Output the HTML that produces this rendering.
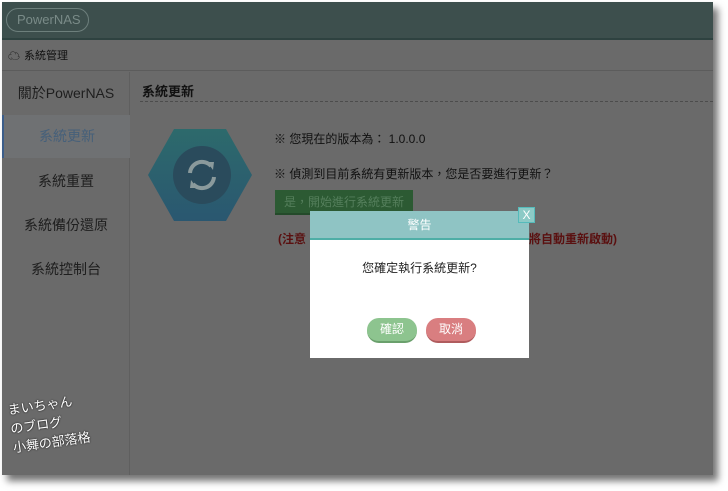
<!DOCTYPE html>
<html><head><meta charset="utf-8"><style>
*{margin:0;padding:0;box-sizing:border-box}
body{width:728px;height:491px;background:#fff;position:relative;overflow:hidden;font-family:"Liberation Sans","Noto Sans CJK TC",sans-serif}
#pg{position:absolute;left:2px;top:2px;width:711px;height:473px;background:#6a6a6a;box-shadow:5px 6px 7px rgba(0,0,0,.55);overflow:hidden}
.hd{position:absolute;left:0;top:0;width:100%;height:38px;background:#3d4f4d;border-bottom:2px solid #2e4240}
.logo{position:absolute;left:4px;top:6px;width:83px;height:24px;border:1px solid #6d7f7c;border-radius:12px;color:#7a8b88;font-size:13px;line-height:22px;padding-left:10px}
.tb{position:absolute;left:0;top:40px;width:100%;height:29px;border-bottom:1px solid #5c5c5c;font-size:11px;color:#111;line-height:29px;padding-left:22px}
.side{position:absolute;left:0;top:70px;width:128px;height:403px;border-right:1px solid #5f5f5f}
.si{position:absolute;left:0;width:128px;text-align:center;font-size:14px;color:#1e1e1e}
.sel{background:#6f7173;border-left:2px solid #3b5d8a;color:#46607a}
.t{position:absolute;left:140px;top:79px;font-size:13px;color:#111;font-weight:bold}
.dl{position:absolute;left:138px;top:99px;width:573px;border-top:1px dashed #4c4c4c}
.hex{position:absolute;left:146px;top:127px;width:104px;height:92px;clip-path:polygon(25% 0,75% 0,100% 50%,75% 100%,25% 100%,0 50%);background:linear-gradient(#2d6a6c,#2a5770)}
.circ{position:absolute;left:171px;top:144px;width:58px;height:58px;border-radius:50%;background:#2a4b5c}
.tx{position:absolute;font-size:12px;color:#111}
.btn{position:absolute;left:273px;top:188px;width:138px;height:25px;background:#2c5a33;color:#557f5c;font-size:12px;text-align:center;line-height:24px;border-bottom:2px solid #244a2a}
.red{position:absolute;font-size:12px;color:#5a1010;font-weight:bold}
.md{position:absolute;left:308px;top:209px;width:219px;height:147px;background:#fff}
.mh{height:29px;background:#8fc4c4;border-bottom:2px solid #4eaea6;text-align:center;color:#fff;font-size:12px;line-height:29px}
.x{position:absolute;left:516px;top:205px;width:17px;height:16px;background:#8ccac6;border:1px solid #5bb;color:#fff;font-size:12px;text-align:center;line-height:14px}
.mb{position:absolute;left:0;top:48px;width:100%;text-align:center;font-size:12px;color:#222}
.b{position:absolute;top:107px;width:50px;height:25px;border-radius:12px;color:#fff;font-size:12px;text-align:center;line-height:23px}
</style></head><body>
<div id="pg">
<div class="hd"><div class="logo">PowerNAS</div></div>
<div class="tb">系統管理<span style="position:absolute;left:6px;top:0;font-size:12px">☁</span></div>
<div class="side">
<div class="si" style="top:11px">關於PowerNAS</div>
<div class="si sel" style="top:43px;height:43px;line-height:43px">系統更新</div>
<div class="si" style="top:99px">系統重置</div>
<div class="si" style="top:143px">系統備份還原</div>
<div class="si" style="top:187px">系統控制台</div>
</div>
<div class="t">系統更新</div>
<div class="dl"></div>
<div class="hex"></div>
<div class="circ"><svg width="58" height="58" viewBox="0 0 58 58"><g fill="none" stroke="#8a9a9c" stroke-width="4"><path d="M17 27a12 12 0 0 1 21-7"/><path d="M41 31a12 12 0 0 1-21 7"/></g><path d="M34 16l7 0-1 8z M24 42l-7 0 1-8z" fill="#8a9a9c"/></svg></div>
<div class="tx" style="left:272px;top:128px">※ 您現在的版本為： 1.0.0.0</div>
<div class="tx" style="left:272px;top:163px">※ 偵測到目前系統有更新版本，您是否要進行更新？</div>
<div class="btn">是，開始進行系統更新</div>
<div class="red" style="left:276px;top:228px">(注意</div>
<div class="red" style="left:527px;top:228px">將自動重新啟動)</div>
<div class="md"><div class="mh">警告</div><div class="mb">您確定執行系統更新?</div>
<div class="b" style="left:57px;background:#8dc48f;border-bottom:2px solid #6aa06c">確認</div>
<div class="b" style="left:116px;background:#d97e80;border-bottom:2px solid #b05c5e">取消</div></div>
<div class="x">X</div>
<div style="position:absolute;left:8px;top:392px;color:#fff;font-size:13px;transform:rotate(-8deg);text-shadow:0 0 2px #000">まいちゃん<br>のブログ<br>小舞の部落格</div>
</div>
</body></html>
